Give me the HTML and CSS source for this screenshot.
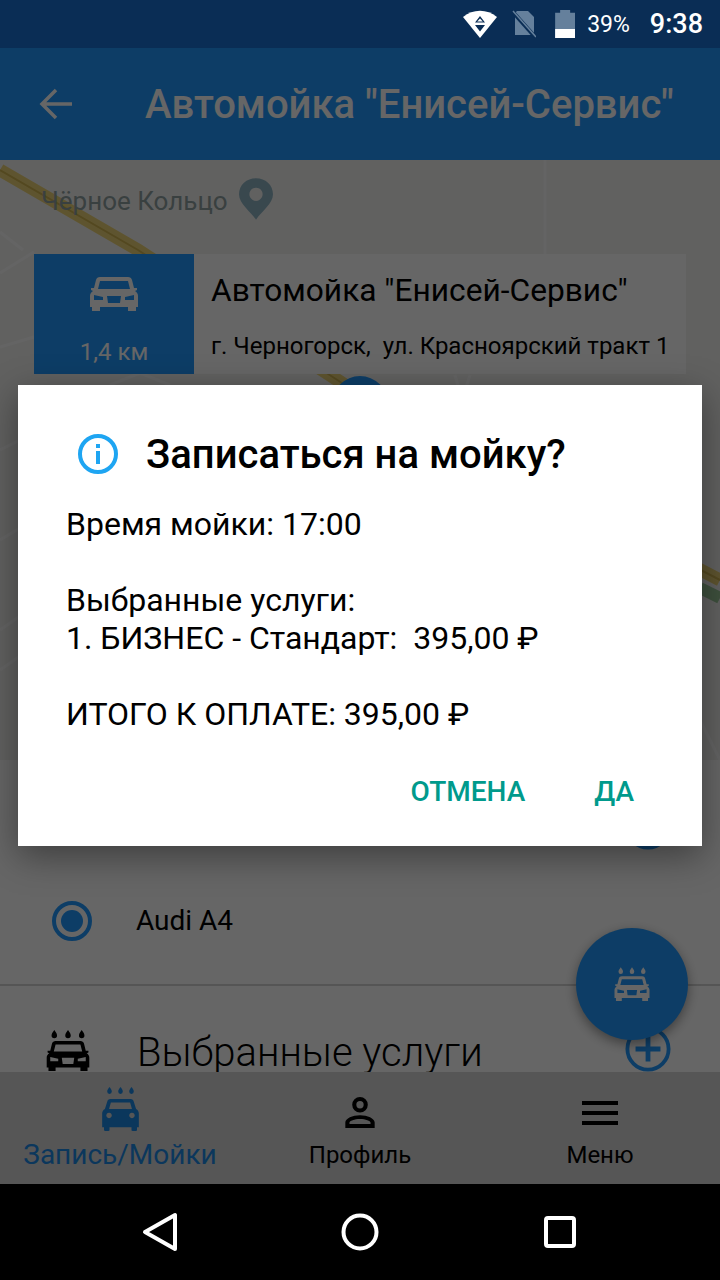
FILE: index.html
```html
<!DOCTYPE html>
<html lang="ru">
<head>
  <meta charset="UTF-8" />
  <meta name="viewport" content="width=device-width, initial-scale=1.0"/>
  <title>Автомойка "Енисей-Сервис"</title>
  <link rel="stylesheet" href="styles.css">
</head>
<body>
  <svg class="defs" width="0" height="0">
    <symbol id="car" viewBox="0 0 48 36">
      <path fill-rule="evenodd" d="M10 1H38C40 1 41.500 2 42 4L44 12H47V14L45 15C47 16 48 18 48 20V31H46V35H38V31H10V35H2V31H0V20C0 18 1 16 3 15L1 14V12H4L6 4C6.500 2 8 1 10 1ZM10 5H38L40 13H8ZM4 19L13 21V24H4ZM44 19L35 21V24H44ZM17 20H31L30 27H18Z"/>
    </symbol>
    <symbol id="carwash" viewBox="0 0 48 46">
      <path d="M9 0C11 3 12 4 12 6A3 3 0 0 1 6 6C6 4 7 3 9 0ZM24 0C26 3 27 4 27 6A3 3 0 0 1 21 6C21 4 22 3 24 0ZM39 0C41 3 42 4 42 6A3 3 0 0 1 36 6C36 4 37 3 39 0Z"/>
      <use href="#car" x="0" y="11" width="48" height="35" preserveAspectRatio="none"/>
    </symbol>
    <symbol id="carwash-nav" viewBox="0 0 40 48">
      <path d="M8 0C10 2.500 10.500 3.500 10.500 5A2.500 2.500 0 0 1 5.500 5C5.500 3.500 6 2.500 8 0ZM20 0C22 2.500 22.500 3.500 22.500 5A2.500 2.500 0 0 1 17.500 5C17.500 3.500 18 2.500 20 0ZM32 0C34 2.500 34.500 3.500 34.500 5A2.500 2.500 0 0 1 29.500 5C29.500 3.500 30 2.500 32 0Z"/>
      <path fill-rule="evenodd" d="M9 13H31C33 13 34 14 34.500 16L37 24C39 25 40 27 40 29V44H38V47C38 47.500 37.500 48 37 48H33C32.500 48 32 47.500 32 47V44H8V47C8 47.500 7.500 48 7 48H3C2.500 48 2 47.500 2 47V44H0V29C0 27 1 25 3 24L5.500 16C6 14 7 13 9 13ZM9.500 17H30.500L32.500 24H7.500ZM7.500 28A3 3 0 1 0 7.501 28ZM32.500 28A3 3 0 1 0 32.501 28Z"/>
    </symbol>
    <symbol id="plus" viewBox="0 0 48 48">
      <circle cx="24" cy="24" r="21.500" fill="none" stroke="currentColor" stroke-width="4"/>
      <path d="M24 11V37M11 24H37" fill="none" stroke="currentColor" stroke-width="5"/>
    </symbol>
  </svg>

  <div class="screen">
    <div class="statusbar">
      <svg class="st-wifi" width="34" height="28" viewBox="0 0 34 28">
        <path d="M0 7C10 -1.500 24 -1.500 34 7L17 28Z" fill="#fff"/>
        <path d="M17 6L22 12.500H12ZM12 15H22L17 21.500Z" fill="#0a2d55"/>
        <path d="M17 8.500L19.800 11.500H14.200Z" fill="#fff"/>
      </svg>
      <svg class="st-sim" width="24" height="28" viewBox="0 0 24 28">
        <path d="M5 1H16L22 7V25H3V3Z" fill="#65809c"/>
        <path d="M0 1L24 28" stroke="#0a2d55" stroke-width="4"/>
        <path d="M1 1L24 27" stroke="#65809c" stroke-width="1.500"/>
      </svg>
      <div class="st-battery"><div class="st-charge"></div></div>
      <span class="st-pct">39%</span>
      <span class="st-time">9:38</span>
    </div>

    <div class="app">
      <header class="appbar">
        <svg class="back" width="34" height="32" viewBox="0 0 34 32">
          <path d="M33 16H3M17 2L3 16L17 30" fill="none" stroke="currentColor" stroke-width="3.500"/>
        </svg>
        <h1>Автомойка "Енисей-Сервис"</h1>
      </header>

      <main class="content">
        <section class="map">
          <svg class="map-bg" width="720" height="600" viewBox="0 0 720 600">
            <g fill="none" stroke="#fff" stroke-width="3" opacity="0.6">
              <path d="M545 0V94"/>
              <path d="M0 72L23 90M0 113L34 92M0 187L34 177M0 290L20 280M0 380L20 368M0 470L20 456M0 510L20 496"/>
              <path d="M110 225L140 213L170 225M455 215L462 240L470 215"/>
              <path d="M700 560L720 600"/>
            </g>
            <path d="M0 10L138 90L345 225L720 420" fill="none" stroke="#ecd377" stroke-width="13"/>
            <path d="M0 10L138 90L345 225L720 420" fill="none" stroke="#d0b450" stroke-width="2"/>
            <path d="M700 428L720 438" fill="none" stroke="#9cc79a" stroke-width="12"/>
          </svg>
          <div class="place">
            <span class="place-name">Чёрное Кольцо</span>
            <svg width="34" height="42" viewBox="0 0 36 44">
              <path fill-rule="evenodd" d="M18 0C28 0 36 7 36 17C36 27 24 35 18 44C12 35 0 27 0 17C0 7 8 0 18 0ZM18 10A7 7 0 1 0 18.010 10Z"/>
            </svg>
          </div>
          <div class="marker"></div>
          <div class="card">
            <div class="card-side">
              <svg class="card-car" width="48" height="36"><use href="#car"/></svg>
              <span>1,4 км</span>
            </div>
            <div class="card-info">
              <div class="card-name">Автомойка "Енисей-Сервис"</div>
              <div class="card-addr">г. Черногорск,&nbsp; ул. Красноярский тракт 1</div>
            </div>
          </div>
        </section>

        <section class="panel">
          <div class="panel-top">
            <svg class="add" width="46" height="46"><use href="#plus"/></svg>
          </div>
          <div class="radio-row">
            <div class="radio"><div class="radio-dot"></div></div>
            <span>Audi A4</span>
          </div>
          <div class="services">
            <svg class="services-icon" width="44" height="42"><use href="#carwash"/></svg>
            <span class="services-title">Выбранные услуги</span>
            <svg class="add add-low" width="46" height="46"><use href="#plus"/></svg>
          </div>
        </section>

        <button class="fab">
          <svg width="36" height="35"><use href="#carwash"/></svg>
        </button>
      </main>

      <nav class="tabs">
        <div class="tab tab-active">
          <div class="tab-icon"><svg width="37" height="44"><use href="#carwash-nav"/></svg></div>
          <span>Запись/Мойки</span>
        </div>
        <div class="tab">
          <div class="tab-icon">
            <svg width="34" height="33" viewBox="0 0 36 36">
              <path fill-rule="evenodd" d="M18 1A8.500 8.500 0 1 1 18 18A8.500 8.500 0 1 1 18 1ZM18 5.500A4 4 0 1 0 18 13.500A4 4 0 1 0 18 5.500ZM18 21C26 21 34 24.500 34 29V35H2V29C2 24.500 10 21 18 21ZM18 25C12 25 6.500 27 6.500 29V30.500H29.500V29C29.500 27 24 25 18 25Z"/>
            </svg>
          </div>
          <span>Профиль</span>
        </div>
        <div class="tab">
          <div class="tab-icon">
            <svg width="36" height="24" viewBox="0 0 36 24">
              <path d="M0 0H36V4H0ZM0 10H36V14H0ZM0 20H36V24H0Z"/>
            </svg>
          </div>
          <span>Меню</span>
        </div>
      </nav>

      <div class="overlay">
        <div class="dialog">
          <div class="dialog-title">
            <svg width="40" height="40" viewBox="0 0 40 40">
              <circle cx="20" cy="20" r="18" fill="none" stroke="#1ea5f2" stroke-width="4"/>
              <path d="M18 10H22V14H18ZM18 17H22V30H18Z" fill="#1ea5f2"/>
            </svg>
            <h2>Записаться на мойку?</h2>
          </div>
          <div class="dialog-body">Время мойки: 17:00

Выбранные услуги:
1. БИЗНЕС - Стандарт:&nbsp; 395,00 ₽

ИТОГО К ОПЛАТЕ: 395,00 ₽</div>
          <div class="dialog-buttons">
            <button>ОТМЕНА</button>
            <button>ДА</button>
          </div>
        </div>
      </div>
    </div>

    <div class="navbar">
      <svg width="40" height="40" viewBox="0 0 40 40">
        <path d="M35 3V37L5 20Z" fill="none" stroke="#fff" stroke-width="4" stroke-linejoin="round"/>
      </svg>
      <svg width="40" height="40" viewBox="0 0 40 40">
        <circle cx="20" cy="20" r="16.500" fill="none" stroke="#fff" stroke-width="4"/>
      </svg>
      <svg width="40" height="40" viewBox="0 0 40 40">
        <rect x="6" y="6" width="28" height="28" rx="2" fill="none" stroke="#fff" stroke-width="4"/>
      </svg>
    </div>
  </div>
</body>
</html>
```

FILE: styles.css
```css
body {
  margin: 0;
  font-family: Roboto, 'Noto Sans', sans-serif;
  color: #000;
}
h1, h2 {
  margin: 0;
}
.defs {
  position: absolute;
}
.screen {
  width: 720px;
  height: 1280px;
  display: flex;
  flex-direction: column;
  overflow: hidden;
}

/* status bar */
.statusbar {
  height: 48px;
  background: #0a2d55;
  color: #fff;
  display: flex;
  align-items: center;
  padding-right: 17px;
  justify-content: flex-end;
  flex-shrink: 0;
}
.st-sim {
  margin-left: 15px;
}
.st-battery {
  width: 20px;
  height: 28px;
  margin-left: 19px;
  background: #65809c;
  display: flex;
  align-items: flex-end;
  clip-path: polygon(25% 0, 75% 0, 75% 10%, 100% 10%, 100% 100%, 0 100%, 0 10%, 25% 10%);
}
.st-charge {
  width: 100%;
  height: 9px;
  background: #fff;
}
.st-pct {
  font-size: 23px;
  margin-left: 12px;
}
.st-time {
  font-size: 27px;
  font-weight: 500;
  margin-left: 20px;
}

.app {
  flex: 1;
  position: relative;
  display: flex;
  flex-direction: column;
  min-height: 0;
}

/* app bar */
.appbar {
  height: 112px;
  background: #219aff;
  color: #fff;
  display: flex;
  align-items: center;
  padding-left: 39px;
  flex-shrink: 0;
}
.appbar h1 {
  font-size: 40px;
  font-weight: 500;
  margin-left: 72px;
  white-space: nowrap;
}

.content {
  flex: 1;
  position: relative;
  overflow: hidden;
  background: #fff;
}

/* map */
.map {
  height: 600px;
  position: relative;
  background: #f3f3f1;
  overflow: hidden;
  padding-top: 94px;
  box-sizing: border-box;
}
.map-bg {
  position: absolute;
  left: 0;
  top: 0;
}
.place {
  position: absolute;
  left: 41px;
  top: 18px;
  display: flex;
  align-items: center;
  gap: 11px;
  font-size: 26px;
  color: #90a0a0;
  fill: #90b4c4;
}
.place-name {
  margin-top: 3px;
}
.marker {
  position: absolute;
  left: 332px;
  top: 216px;
  width: 56px;
  height: 56px;
  border-radius: 50%;
  background: #219aff;
}
.card {
  position: relative;
  margin: 0 34px;
  height: 120px;
  display: flex;
  background: #fff;
}
.card-side {
  width: 160px;
  background: #219aff;
  color: #fff;
  display: flex;
  flex-direction: column;
  align-items: center;
  font-size: 24px;
}
.card-car {
  fill: #fff;
  margin-top: 22px;
  margin-bottom: 26px;
}
.card-info {
  padding-left: 17px;
  white-space: nowrap;
}
.card-name {
  font-size: 31.7px;
  margin-top: 18px;
}
.card-addr {
  font-size: 24px;
  margin-top: 23px;
}

/* lower panel */
.panel {
  background: #fff;
}
.panel-top {
  height: 97px;
  display: flex;
  justify-content: flex-end;
  padding: 44px 49px 0 0;
  box-sizing: border-box;
}
.add {
  color: #219aff;
  flex-shrink: 0;
}
.add-low {
  margin-bottom: 4px;
}
.radio-row {
  height: 127px;
  border-bottom: 2px solid #d4d4d4;
  display: flex;
  align-items: center;
  font-size: 28px;
}
.radio {
  width: 40px;
  height: 40px;
  box-sizing: border-box;
  border: 4px solid #219aff;
  border-radius: 50%;
  margin: 0 44px 0 52px;
  display: flex;
  align-items: center;
  justify-content: center;
}
.radio-dot {
  width: 22px;
  height: 22px;
  border-radius: 50%;
  background: #219aff;
}
.services {
  height: 130px;
  display: flex;
  align-items: center;
  padding-right: 49px;
}
.services-icon {
  margin-left: 46px;
  margin-right: 47px;
  fill: #000;
}
.services-title {
  font-size: 40px;
  font-weight: 300;
  flex: 1;
  padding-top: 2px;
}

.fab {
  position: absolute;
  right: 32px;
  bottom: 32px;
  width: 112px;
  height: 112px;
  border: none;
  border-radius: 50%;
  background: #219aff;
  box-shadow: 0 4px 12px rgba(0, 0, 0, 0.4);
  display: flex;
  align-items: center;
  justify-content: center;
  padding: 0;
  fill: #fff;
}

/* bottom tabs */
.tabs {
  height: 112px;
  background: #d6d6d6;
  display: flex;
  flex-shrink: 0;
  position: relative;
}
.tab {
  flex: 1;
  display: flex;
  flex-direction: column;
  align-items: center;
  font-size: 24px;
}
.tab-icon {
  height: 69px;
  display: flex;
  align-items: center;
  padding-top: 12px;
  box-sizing: border-box;
}
.tab-active {
  color: #1c8ae6;
  fill: #1c8ae6;
  font-size: 28px;
}
.tab-active .tab-icon {
  height: 66px;
  padding-top: 7px;
}

/* dialog */
.overlay {
  position: absolute;
  inset: 0;
  background: rgba(0, 0, 0, 0.6);
  display: flex;
  align-items: center;
  justify-content: center;
}
.dialog {
  width: 684px;
  box-sizing: border-box;
  background: #fff;
  padding: 48px 68px 37px 0;
  margin-bottom: 1px;
  box-shadow: 0 10px 34px rgba(0, 0, 0, 0.4);
}
.dialog-title {
  display: flex;
  align-items: center;
  gap: 28px;
  margin-left: 60px;
  height: 42px;
}
.dialog-title h2 {
  font-size: 40px;
  font-weight: 500;
  white-space: nowrap;
}
.dialog-body {
  margin: 30px 0 0 48px;
  font-size: 32px;
  line-height: 38px;
  white-space: pre-line;
}
.dialog-buttons {
  margin-top: 40px;
  display: flex;
  justify-content: flex-end;
  gap: 69px;
}
.dialog-buttons button {
  border: none;
  background: none;
  padding: 0;
  height: 36px;
  font-family: inherit;
  font-size: 28px;
  font-weight: 500;
  color: #009a8c;
}

/* android nav */
.navbar {
  height: 96px;
  background: #000;
  display: flex;
  align-items: center;
  justify-content: center;
  gap: 160px;
  flex-shrink: 0;
}
```
